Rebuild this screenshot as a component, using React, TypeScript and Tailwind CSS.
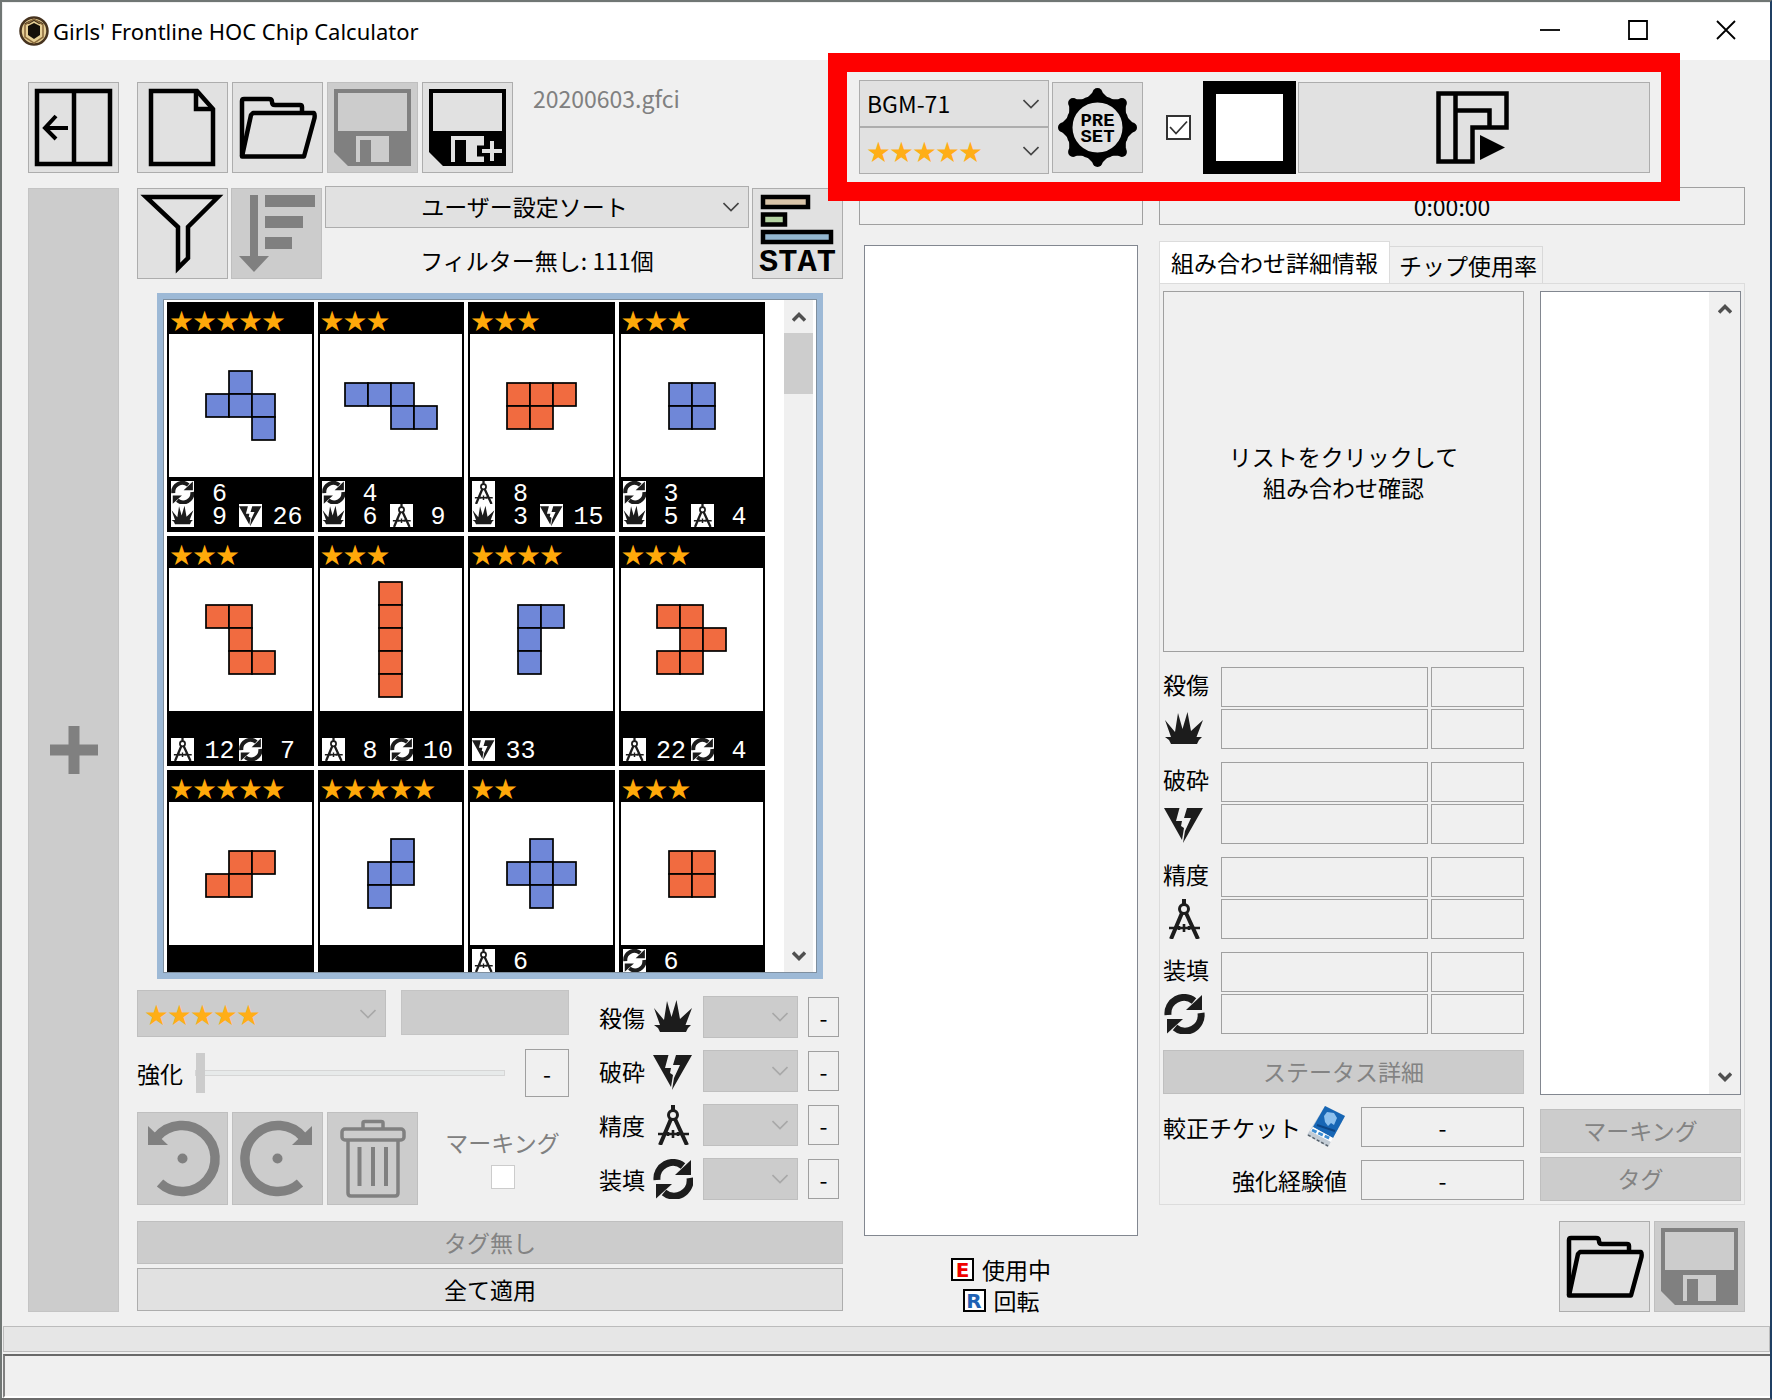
import React from "react";
import clsx from "clsx";

type Stat = "dmg" | "brk" | "hit" | "rld";

type Chip = {
  stars: number;
  color: "blue" | "orange";
  shape: string[];
  top?: [Stat, number][];
  bottom?: [Stat, number][];
};

const CHIPS: Chip[] = [
  { stars: 5, color: "blue", shape: [".#.", "###", "..#"], top: [["rld", 6]], bottom: [["dmg", 9], ["brk", 26]] },
  { stars: 3, color: "blue", shape: ["###.", "..##"], top: [["rld", 4]], bottom: [["dmg", 6], ["hit", 9]] },
  { stars: 3, color: "orange", shape: ["###", "##."], top: [["hit", 8]], bottom: [["dmg", 3], ["brk", 15]] },
  { stars: 3, color: "blue", shape: ["##", "##"], top: [["rld", 3]], bottom: [["dmg", 5], ["hit", 4]] },
  { stars: 3, color: "orange", shape: ["##.", ".#.", ".##"], bottom: [["hit", 12], ["rld", 7]] },
  { stars: 3, color: "orange", shape: ["#", "#", "#", "#", "#"], bottom: [["hit", 8], ["rld", 10]] },
  { stars: 4, color: "blue", shape: ["##", "#.", "#."], bottom: [["brk", 33]] },
  { stars: 3, color: "orange", shape: ["##.", ".##", "##."], bottom: [["hit", 22], ["rld", 4]] },
  { stars: 5, color: "orange", shape: [".##", "##."] },
  { stars: 5, color: "blue", shape: [".#", "##", "#."] },
  { stars: 2, color: "blue", shape: [".#.", "###", ".#."], top: [["hit", 6]] },
  { stars: 3, color: "orange", shape: ["##", "##"], top: [["rld", 6]] },
];

const STATS: { id: Stat; label: string }[] = [
  { id: "dmg", label: "殺傷" },
  { id: "brk", label: "破砕" },
  { id: "hit", label: "精度" },
  { id: "rld", label: "装填" },
];

const StatIcon = ({ id, className }: { id: Stat; className?: string }) => (
  <svg viewBox="0 0 40 40" className={className} fill="#1c1c1c" aria-hidden="true">
    {id === "dmg" && (
      <path d="M7 35 L5 31 L1 28 L7 28 L1 11 L11 23 L14 4 L18.500 20 L23.500 3 L27 22 L39 11 L32.500 28 L38 28 L35 31 L33 35Z" />
    )}
    {id === "brk" && (
      <>
        <path d="M0 4 H15.500 L12 17 H18 L17 22 L20 24 L18 36Z" />
        <path d="M23 4 H39 L19 39 L21 27 L27 14 H20Z" />
      </>
    )}
    {id === "hit" && (
      <g fill="none" stroke="#1c1c1c">
        <path d="M20 0 V6" strokeWidth="4" />
        <circle cx="20" cy="10" r="4.500" strokeWidth="3" />
        <path d="M18 14 L7 40 M22 14 L34 40" strokeWidth="4" />
        <path d="M5 29 H36 M20 25 V33 M15 27 V31 M25 27 V31" strokeWidth="2.600" />
      </g>
    )}
    {id === "rld" && (
      <>
        <path d="M4 21 A16 16 0 0 1 30 7" fill="none" stroke="#1c1c1c" strokeWidth="7" />
        <path d="M38 1 V16 H22 Z" />
        <path d="M37 19 A16 16 0 0 1 11 33.500" fill="none" stroke="#1c1c1c" strokeWidth="7" />
        <path d="M3 39.500 V25 H19 Z" />
      </>
    )}
  </svg>
);

const ICON = {
  fill: "none",
  stroke: "currentColor",
  strokeWidth: 4.5,
  "aria-hidden": true,
  className: "h-[91px] w-[91px] shrink-0",
  viewBox: "0 0 91 91",
} as const;

const PanelIcon = () => (
  <svg {...ICON}>
    <path d="M9 9 H82 V82 H9 Z M46 9 V82" />
    <path d="M40 46 H17" strokeWidth="4" />
    <path d="M28 34 L17 46 L28 57" strokeWidth="4" />
  </svg>
);

const NewIcon = () => (
  <svg {...ICON}>
    <path d="M14 9 H60 L76 27 V82 H14 Z" />
    <path d="M59 9 V27 H76" />
  </svg>
);

const FolderIcon = () => (
  <svg {...ICON} strokeLinejoin="round">
    <path d="M10 74 V19 Q10 17 12 17 H37 Q40 17 40 20 Q40 23 43 23 H68 Q70 23 70 25 V30" />
    <path d="M21 31 H82 Q83 32 82.500 36 L72 74.500 H10 L19 33 Z" />
  </svg>
);

const SaveIcon = ({ plus }: { plus?: boolean }) => (
  <svg {...ICON} stroke="none" fill="currentColor">
    <path fillRule="evenodd" d="M7 7 H84 V84 H21 L7 70 Z M11 11 V49 H80 V11 Z M29 54 V80 H62 V54 Z" />
    <path d="M33 58 H44 V80 H33 Z" />
    {plus && (
      <>
        <path d="M55 69 H84 M70 55 V83" stroke="black" strokeWidth="11" />
        <path d="M60 69 H80 M70 59 V79" stroke="#e1e1e1" strokeWidth="4" />
      </>
    )}
  </svg>
);

const FilterIcon = () => (
  <svg {...ICON}>
    <path d="M9 9 H81 L51 39 V70 L41 80 V39 Z" />
  </svg>
);

const SortIcon = () => (
  <svg {...ICON} stroke="none" fill="currentColor">
    <path d="M19 7 H27 V68 H38 L23 84 L8 68 H19 Z" />
    <path d="M34 7 H84 V19 H34 Z M34 28 H72 V40 H34 Z M34 49 H61 V61 H34 Z" />
  </svg>
);

const StatChartIcon = () => (
  <svg {...ICON} stroke="black" strokeWidth="4.500">
    <path d="M11 9 H56 V19 H11 Z" fill="#d9c4a8" />
    <path d="M11 26.500 H33 V36.500 H11 Z" fill="#b4d3a2" />
    <path d="M11 44 H79 V54 H11 Z" fill="#93b6cf" />
    <text x="45.500" y="83" textAnchor="middle" stroke="none" fill="black" className="font-['Liberation_Mono',monospace] text-[32px] font-bold leading-none">
      STAT
    </text>
  </svg>
);

const PresetIcon = () => (
  <svg {...ICON} stroke="black">
    <circle cx="45.500" cy="45.500" r="28.500" strokeWidth="7" />
    {[0, 45, 90, 135, 180, 225, 270, 315].map((a) => (
      <g key={a} transform={`rotate(${a} 45.5 45.5)`} fill="black" stroke="none">
        <path d="M35 16 L41 10 H50 L56 16 Z" />
        <circle cx="45.500" cy="11" r="5" />
      </g>
    ))}
    <g stroke="none" fill="black" textAnchor="middle" className="font-['Liberation_Mono',monospace] text-[19px] font-bold">
      <text x="45.500" y="44">PRE</text>
      <text x="45.500" y="60">SET</text>
    </g>
  </svg>
);

const CombineIcon = () => (
  <svg viewBox="0 0 73 73" className="h-[73px] w-[73px]" fill="none" stroke="black" strokeWidth="4.500" aria-hidden="true">
    <path d="M2.500 2.500 H70.500 V36.500 H36.500 V70.500 H2.500 Z" />
    <path d="M19.500 2.500 V70.500 M19.500 19.500 H53.500 V36.500" />
    <path d="M44 44 L69 56.500 L44 69 Z" fill="black" stroke="none" />
  </svg>
);

const RotateIcon = ({ flip }: { flip?: boolean }) => (
  <svg {...ICON} className={clsx("h-[91px] w-[91px] shrink-0", flip && "-scale-x-100")}>
    <path d="M23 70 A33 33 0 1 0 20 24" strokeWidth="9.500" />
    <path d="M11 13 L31 32 H11 Z" fill="currentColor" stroke="none" />
    <circle cx="45.500" cy="45.500" r="5" fill="currentColor" stroke="none" />
  </svg>
);

const TrashIcon = () => (
  <svg {...ICON} strokeWidth="3.500">
    <rect x="15" y="16" width="62" height="11" rx="3" />
    <path d="M36 16 V10 Q36 8.500 38 8.500 H54 Q56 8.500 56 10 V16" />
    <path d="M21 28 V80 Q21 83 24 83 H68 Q71 83 71 80 V28" />
    <path d="M32.500 34 V73 M46 34 V73 M59 34 V73" strokeWidth="4" />
  </svg>
);

const TicketIcon = () => (
  <svg viewBox="0 0 42 42" className="h-[42px] w-[42px]" aria-hidden="true">
    <path d="M18 0 L38 10 L21 41 L0 29 Z" fill="#c3ccd5" />
    <path d="M18 0 L38 10 L26 32 L6 21 Z" fill="#1766b5" />
    <path d="M20 6 L27 7 L30 12 L27 19 L24 17 L21 20 L18 16 L17 10 Z" fill="#8cc0ee" />
    <path d="M10 19 L28 25" stroke="#0d4687" strokeWidth="2" />
    <path d="M6 21 L26 32 L24 36 L3 25 Z" fill="white" />
    <path d="M5 24 L24 33" stroke="#3f8fd4" strokeWidth="3" strokeDasharray="5 2" />
    <path d="M1 29 L21 40" stroke="#59636d" strokeWidth="1.500" strokeDasharray="3 2" />
  </svg>
);

const GemIcon = () => (
  <svg viewBox="0 0 30 30" className="h-[30px] w-[30px]" aria-hidden="true">
    <circle cx="15" cy="15" r="13.500" fill="#e6cf96" stroke="#46331f" strokeWidth="2.500" />
    <path d="M5 8 Q15 0 25 8 L20 8 L15 5 L10 8 Z" fill="#3a2a1a" />
    <path d="M15 3 L24 9 V21 L15 27 L6 21 V9 Z" fill="none" stroke="#8a6a3c" strokeWidth="1.500" />
    <path d="M15 7 L21 10 V19 L15 23 L9 19 V10 Z" fill="#15100a" />
  </svg>
);

const Chevron = ({ className }: { className?: string }) => (
  <svg viewBox="0 0 16 10" className={clsx("h-[10px] w-4", className)} fill="none" stroke="currentColor" strokeWidth="1.600" aria-hidden="true">
    <path d="M0.500 1 L8 8.500 L15.500 1" />
  </svg>
);

const ScrollArrow = ({ down }: { down?: boolean }) => (
  <svg viewBox="0 0 14 10" className={clsx("h-[10px] w-[14px] text-[#505050]", down && "rotate-180")} fill="none" stroke="currentColor" strokeWidth="3.500" aria-hidden="true">
    <path d="M1 8.500 L7 2.500 L13 8.500" />
  </svg>
);

const IconButton = ({ label, disabled, tall, children }: { label: string; disabled?: boolean; tall?: boolean; children: React.ReactNode }) => (
  <button
    type="button"
    aria-label={label}
    disabled={disabled}
    className={clsx(
      "flex w-[91px] shrink-0 items-center justify-center outline -outline-offset-1",
      tall ? "h-[93px]" : "h-[91px]",
      disabled ? "bg-[#cccccc] text-[#808080] outline-[#bfbfbf]" : "bg-[#e1e1e1] text-black outline-[#adadad]"
    )}
  >
    {children}
  </button>
);

const TextButton = ({ disabled, className, children }: { disabled?: boolean; className?: string; children: React.ReactNode }) => (
  <button
    type="button"
    disabled={disabled}
    className={clsx(
      "flex w-full shrink-0 items-center justify-center border pb-[2px]",
      disabled ? "border-[#bfbfbf] bg-[#cccccc] text-[#838383]" : "border-[#adadad] bg-[#e1e1e1]",
      className
    )}
  >
    {children}
  </button>
);

const Combo = ({ label, value, disabled, center, className }: { label: string; value: string; disabled?: boolean; center?: boolean; className?: string }) => (
  <div className={clsx("relative", className)}>
    <select
      aria-label={label}
      disabled={disabled}
      className={clsx(
        "h-full w-full appearance-none border pb-[2px] pl-[7px] pr-8 opacity-100",
        center && "pl-6 [text-align-last:center]",
        disabled ? "border-[#bfbfbf] bg-[#cccccc]" : "border-[#adadad] bg-[#e1e1e1]",
        value.startsWith("★") ? "text-[#ffae17]" : "text-black"
      )}
    >
      <option>{value}</option>
    </select>
    <Chevron className={clsx("pointer-events-none absolute right-[10px] top-1/2 -translate-y-1/2", disabled ? "text-[#a8a8a8]" : "text-[#444444]")} />
  </div>
);

const Field = ({ className, children }: { className?: string; children?: React.ReactNode }) => (
  <output className={clsx("flex items-center justify-center border border-[#a0a0a0] bg-[#f0f0f0]", className)}>{children}</output>
);

const Shape = ({ shape, color }: { shape: string[]; color: Chip["color"] }) => {
  const size = 23;
  const w = shape[0].length * size + 2;
  const h = shape.length * size + 2;
  return (
    <svg width={w} height={h} viewBox={`0 0 ${w} ${h}`} aria-hidden="true">
      {shape.flatMap((row, y) =>
        row.split("").map((c, x) =>
          c === "#" ? (
            <rect
              key={`${x}-${y}`}
              x={x * size + 1}
              y={y * size + 1}
              width={size}
              height={size}
              fill={color === "blue" ? "#6f87d8" : "#f16b40"}
              stroke="black"
              strokeWidth="1.700"
            />
          ) : null
        )
      )}
    </svg>
  );
};

const StatRow = ({ stats = [] }: { stats?: [Stat, number][] }) => (
  <div className="flex h-[23px] pl-1">
    {stats.map(([id, value]) => (
      <div key={id} className="flex w-[68px] items-center">
        <span className="flex h-[23px] w-[23px] shrink-0 items-center justify-center bg-white">
          <StatIcon id={id} className="h-[23px] w-[23px]" />
        </span>
        <span className="flex-1 pl-[6px] pt-[3px] text-center font-['Liberation_Mono',monospace] text-[25px] leading-[23px] text-white">{value}</span>
      </div>
    ))}
  </div>
);

const ChipCard = ({ chip }: { chip: Chip }) => (
  <li className="flex h-[230px] flex-col bg-black">
    <div className="h-8 pl-[3px] pt-[5px] text-[23px] leading-[24px] text-[#ffa90a]">{"★".repeat(chip.stars)}</div>
    <div className="mx-[2px] flex h-[143px] items-center justify-center bg-white">
      <Shape shape={chip.shape} color={chip.color} />
    </div>
    <div className="pt-1">
      <StatRow stats={chip.top} />
      <StatRow stats={chip.bottom} />
    </div>
  </li>
);

const TitleBar = () => (
  <header className="flex h-[57px] shrink-0 items-center bg-white pb-[2px] pl-4">
    <GemIcon />
    <h1 className="ml-1 flex-1 font-['Noto_Sans','Open_Sans',sans-serif] text-[22px]">Girls&apos; Frontline HOC Chip Calculator</h1>
    {[
      ["Minimize", "M0 10 H20"],
      ["Maximize", "M1 1 H19 V19 H1 Z"],
      ["Close", "M1 1 L19 19 M19 1 L1 19"],
    ].map(([label, d]) => (
      <button key={label} type="button" aria-label={label} className="flex h-full w-[88px] items-center justify-center pb-[2px]">
        <svg viewBox="0 0 20 20" className="h-5 w-5" fill="none" stroke="black" strokeWidth="1.800">
          <path d={d} />
        </svg>
      </button>
    ))}
  </header>
);

const ChipList = () => (
  <div className="mx-5 mt-[14px] border-[6px] border-[#9db9d6]">
    <div className="flex h-[674px] overflow-hidden border border-[#7f8f9f] bg-white">
      <ul className="grid flex-1 grid-cols-4 content-start gap-1 pl-[3px] pt-[2px]">
        {CHIPS.map((chip, i) => (
          <ChipCard key={i} chip={chip} />
        ))}
      </ul>
      <div className="ml-[19px] mr-[3px] flex w-[29px] flex-col items-center bg-[#f0f0f0]">
        <div className="flex h-[33px] items-center">
          <ScrollArrow />
        </div>
        <div className="h-[61px] w-full bg-[#cdcdcd]" />
        <div className="mt-auto flex h-[33px] items-center">
          <ScrollArrow down />
        </div>
      </div>
    </div>
  </div>
);

const ChipEditor = () => (
  <div className="mt-[11px] flex gap-[30px] pr-1">
    <div className="min-w-0 flex-1">
      <div className="flex gap-[15px]">
        <Combo label="Stars" value="★★★★★" disabled className="h-[47px] flex-[251]" />
        <div className="h-[45px] flex-[168] border border-[#c4c4c4] bg-[#cccccc]" />
      </div>
      <div className="mt-3 flex h-12 items-center">
        <label htmlFor="level" className="mr-3">強化</label>
        <input
          id="level"
          type="range"
          min="0"
          max="20"
          defaultValue="0"
          disabled
          className="mr-5 h-10 min-w-0 flex-1 appearance-none bg-transparent [&::-webkit-slider-runnable-track]:h-[6px] [&::-webkit-slider-runnable-track]:border [&::-webkit-slider-runnable-track]:border-[#d6d6d6] [&::-webkit-slider-runnable-track]:bg-[#e7eaea] [&::-webkit-slider-thumb]:-mt-[18px] [&::-webkit-slider-thumb]:h-10 [&::-webkit-slider-thumb]:w-[9px] [&::-webkit-slider-thumb]:appearance-none [&::-webkit-slider-thumb]:bg-[#cccccc]"
        />
        <Field className="h-12 w-11">-</Field>
      </div>
      <div className="mt-[15px] flex gap-1">
        <IconButton label="Rotate left" disabled tall>
          <RotateIcon />
        </IconButton>
        <IconButton label="Rotate right" disabled tall>
          <RotateIcon flip />
        </IconButton>
        <IconButton label="Delete" disabled tall>
          <TrashIcon />
        </IconButton>
        <label className="flex flex-1 flex-col items-center justify-center gap-[6px] pb-[3px] pl-[14px] text-[#808080]">
          マーキング
          <input type="checkbox" disabled className="h-6 w-6 appearance-none border border-[#cccccc] bg-white" />
        </label>
      </div>
    </div>
    <div className="flex flex-col gap-3 pt-[6px]">
      {STATS.map((s) => (
        <div key={s.id} className="flex items-center gap-[10px]">
          <span className="w-11 whitespace-nowrap">{s.label}</span>
          <StatIcon id={s.id} className="h-10 w-10" />
          <Combo label={s.label} value="" disabled className="h-[42px] w-[95px]" />
          <Field className="h-10 w-[31px]">-</Field>
        </div>
      ))}
    </div>
  </div>
);

const Inventory = () => (
  <section className="flex min-w-0 flex-[706] flex-col">
    <div className="flex h-[94px] items-center gap-1">
      <IconButton label="New">
        <NewIcon />
      </IconButton>
      <IconButton label="Open">
        <FolderIcon />
      </IconButton>
      <IconButton label="Save" disabled>
        <SaveIcon />
      </IconButton>
      <IconButton label="Save as">
        <SaveIcon plus />
      </IconButton>
      <span className="self-start pl-4 pt-px text-[#808080]">20200603.gfci</span>
    </div>
    <div className="mt-3 flex h-[93px] items-end gap-[3px]">
      <IconButton label="Filter">
        <FilterIcon />
      </IconButton>
      <IconButton label="Sort order" disabled>
        <SortIcon />
      </IconButton>
      <div className="flex h-full flex-1 flex-col items-center">
        <Combo label="Sort" value="ユーザー設定ソート" center className="h-[42px] w-full" />
        <span className="flex flex-1 items-center pt-3">フィルター無し: 111個</span>
      </div>
      <IconButton label="Statistics">
        <StatChartIcon />
      </IconButton>
    </div>
    <ChipList />
    <ChipEditor />
    <div className="mt-4 flex flex-col gap-1">
      <TextButton disabled className="h-[43px]">タグ無し</TextButton>
      <TextButton className="h-[43px]">全て適用</TextButton>
    </div>
  </section>
);

const Controls = () => (
  <div className="relative flex h-[94px] gap-4">
    <div className="flex min-w-0 flex-[284] items-center gap-[3px]">
      <div className="flex flex-1 flex-col">
        <Combo label="HOC" value="BGM-71" className="h-[47px]" />
        <Combo label="HOC stars" value="★★★★★" className="h-[47px]" />
      </div>
      <IconButton label="Preset">
        <PresetIcon />
      </IconButton>
    </div>
    <div className="min-w-0 flex-[586]">
      <div className="flex h-full items-center pl-[7px] pr-[95px]">
        <span className="relative mr-3 h-[25px] w-[25px] shrink-0">
          <input type="checkbox" aria-label="Use marking color" defaultChecked className="block h-full w-full appearance-none border-2 border-[#333333] bg-white" />
          <svg viewBox="0 0 25 25" className="pointer-events-none absolute inset-0" fill="none" stroke="#333333" strokeWidth="1.800" aria-hidden="true">
            <path d="M4 12 L10 18.500 L21 6.500" />
          </svg>
        </span>
        <button type="button" aria-label="Color" className="mr-[2px] h-[93px] w-[93px] shrink-0 border-[13px] border-black bg-white" />
        <button type="button" aria-label="Combine" className="flex h-[91px] flex-1 items-center justify-center border border-[#adadad] bg-[#e1e1e1] pr-1">
          <CombineIcon />
        </button>
      </div>
    </div>
    {/* red highlight around the combination controls */}
    <div className="pointer-events-none absolute -bottom-[27px] -left-[31px] -top-[27px] right-[65px] z-10 border-[19px] border-[#fe0000]" />
  </div>
);

const ResultPanel = () => (
  <section className="flex min-w-0 flex-[586] flex-col">
    <Field className="h-[38px] w-full">0:00:00</Field>
    <div role="tablist" className="mt-4 flex items-end">
      <button type="button" role="tab" aria-selected="true" className="h-[42px] border border-b-0 border-[#dcdcdc] bg-white px-[11px] pb-[2px]">
        組み合わせ詳細情報
      </button>
      <button type="button" role="tab" aria-selected="false" className="h-[37px] border border-b-0 border-l-0 border-[#d9d9d9] pl-[9px] pr-[5px]">
        チップ使用率
      </button>
    </div>
    <div className="flex flex-1 gap-4 border border-[#dcdcdc] pb-[3px] pl-[3px] pr-[3px] pt-[7px]">
      <div className="flex min-w-0 flex-[361] flex-col">
        <div className="flex aspect-square flex-col items-center justify-center border border-[#a0a0a0] text-center leading-[31px]">
          リストをクリックして
          <br />
          組み合わせ確認
        </div>
        <div className="mt-[15px] flex flex-col gap-[13px]">
          {STATS.map((s) => (
            <div key={s.id} className="flex">
              <div className="flex w-[58px] flex-col">
                <span className="flex h-[42px] items-center pb-[9px]">{s.label}</span>
                <StatIcon id={s.id} className="h-[40px] w-[42px]" />
              </div>
              <div className="grid flex-1 grid-cols-[1fr_93px] gap-x-[3px] gap-y-[2px]">
                <Field className="h-10" />
                <Field className="h-10" />
                <Field className="h-10" />
                <Field className="h-10" />
              </div>
            </div>
          ))}
        </div>
        <TextButton disabled className="mt-4 h-11">ステータス詳細</TextButton>
        <div className="mt-[13px] flex h-10 items-center whitespace-nowrap">
          <span className="flex-1">較正チケット</span>
          <TicketIcon />
          <Field className="ml-3 h-10 w-[163px] shrink-0">-</Field>
        </div>
        <div className="mt-[13px] flex h-10 items-center">
          <span className="flex-1 text-right">強化経験値</span>
          <Field className="ml-[14px] h-10 w-[163px] shrink-0">-</Field>
        </div>
      </div>
      <div className="flex min-w-0 flex-[201] flex-col">
        <div className="flex flex-1 justify-end border border-[#828790] bg-white">
          <div className="flex w-[31px] flex-col items-center justify-between bg-[#f0f0f0] py-3">
            <ScrollArrow />
            <ScrollArrow down />
          </div>
        </div>
        <TextButton disabled className="mt-[14px] h-11">マーキング</TextButton>
        <TextButton disabled className="mt-1 h-11">タグ</TextButton>
      </div>
    </div>
    <div className="mt-4 flex justify-end gap-1">
      <IconButton label="Open combination">
        <FolderIcon />
      </IconButton>
      <IconButton label="Save combination" disabled>
        <SaveIcon />
      </IconButton>
    </div>
  </section>
);

const Badge = ({ letter, className }: { letter: string; className: string }) => (
  <span className={clsx("flex h-[23px] w-[23px] items-center justify-center border-2 border-black bg-white font-['DejaVu_Sans',sans-serif] text-[20px] font-bold leading-none", className)}>
    {letter}
  </span>
);

const CombinationList = () => (
  <section className="flex min-w-0 flex-[284] flex-col">
    <Field className="h-[38px] w-full" />
    <div className="mx-[5px] mt-5 flex-1 border border-[#828790] bg-white" />
    <div className="-mb-1 mt-[18px] flex flex-col items-center leading-[31px]">
      <span className="flex items-center gap-2">
        <Badge letter="E" className="text-[#f00000]" />
        使用中
      </span>
      <span className="flex items-center gap-2">
        <Badge letter="R" className="text-[#1f62b4]" />
        回転
      </span>
    </div>
  </section>
);

const App = () => (
  <div className="flex min-h-screen flex-col border-2 border-b-[#6b6b6b] border-l-[#707674] border-r-[#1f3f63] border-t-[#707674] bg-[#f0f0f0] pl-[1px] pt-[1px] font-['Noto_Sans_CJK_JP',sans-serif] text-[23px] leading-[34px] text-black">
    <TitleBar />
    <main className="flex flex-1 gap-4 pb-[14px] pl-[25px] pr-[25px] pt-5">
      <aside className="mr-[2px] flex shrink-0 flex-col">
        <div className="flex h-[94px] items-center">
          <IconButton label="Toggle panel">
            <PanelIcon />
          </IconButton>
        </div>
        <button type="button" disabled aria-label="Add chip" className="mt-[14px] flex w-[91px] flex-1 items-center justify-center border border-[#c4c4c4] bg-[#cccccc]">
          <svg viewBox="0 0 48 48" className="h-12 w-12" stroke="#808080" strokeWidth="11" aria-hidden="true">
            <path d="M24 0 V48 M0 24 H48" />
          </svg>
        </button>
      </aside>
      <Inventory />
      <div className="flex min-w-0 flex-[886] flex-col">
        <Controls />
        <div className="mt-[13px] flex flex-1 gap-4">
          <CombinationList />
          <ResultPanel />
        </div>
      </div>
    </main>
    <footer>
      <div className="h-[26px] border border-[#bcbcbc] bg-[#e6e6e6]" />
      <div className="mt-[2px] h-[44px] border-b-2 border-l-2 border-t-2 border-b-white border-l-[#808080] border-t-[#696969]" />
    </footer>
  </div>
);

export default App;
